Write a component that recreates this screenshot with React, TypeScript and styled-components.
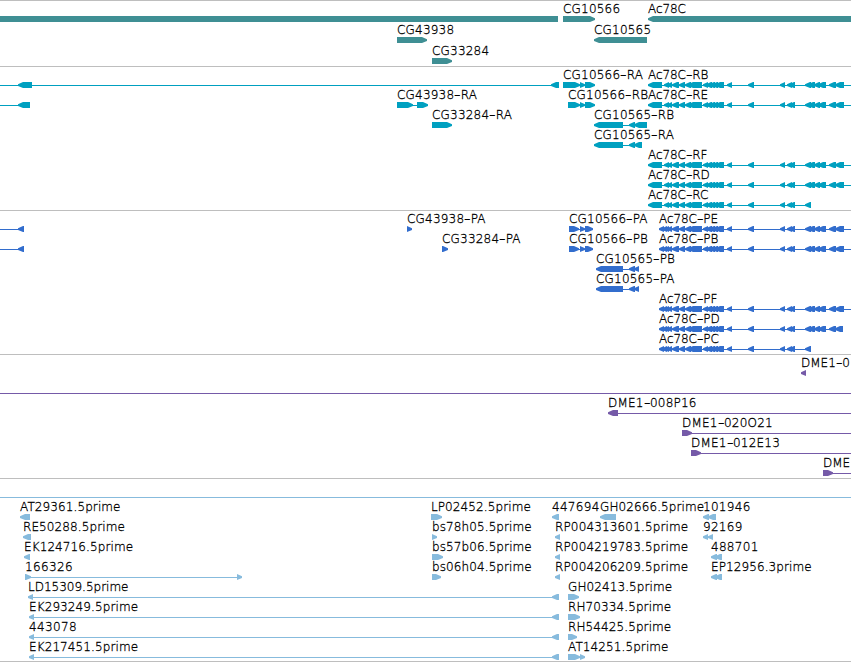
import { Fragment } from "react";
import styled, { createGlobalStyle } from "styled-components";

type Span = [number, number];
type Direction = "left" | "right";

interface Feature {
  label?: string;
  at?: number;
  spacing?: number;
  spans: Span[];
  dir?: Direction;
  line?: Span;
}

interface TrackData {
  name: string;
  color: string;
  rowHeight: number;
  gap: number;
  spacing: number;
  rows: Feature[][];
}

const WIDTH = 851;

// exons shared by every Ac78C transcript
const core: Span[] = [
  [664, 669], [667, 672], [672, 679], [679, 685], [685, 691], [688, 702],
  [703, 708], [706, 712], [709, 715], [712, 718], [715, 724],
  [727, 732], [748, 754], [780, 785], [787, 792], [789, 795],
];
const tail: Span[] = [
  [805, 811], [808, 815], [814, 820], [818, 826], [829, 836], [835, 844],
];
const rna: Span[] = [[648, 662], ...core];
const cds: Span[] = [[659, 664], [662, 667], ...core];

const ac78c = (label: string, spans: Span[], end = WIDTH): Feature => ({
  label,
  at: spans[0][0],
  spacing: -0.08,
  spans,
  line: [spans[0][0] + 3, end],
});

const tracks: TrackData[] = [
  {
    name: "genes",
    color: "#3f8f94",
    rowHeight: 21,
    gap: 2,
    spacing: 0.2,
    rows: [
      [
        { spans: [[-10, 558]] },
        { label: "CG10566", at: 563, dir: "right", spans: [[563, 595]] },
        { label: "Ac78C", at: 648, spacing: -0.08, spans: [[648, 860]] },
      ],
      [
        { label: "CG43938", at: 397, dir: "right", spans: [[397, 427]] },
        { label: "CG10565", at: 594, spans: [[594, 647]] },
      ],
      [{ label: "CG33284", at: 432, dir: "right", spans: [[432, 452]] }],
    ],
  },
  {
    name: "transcripts",
    color: "#00a0c0",
    rowHeight: 20,
    gap: 3,
    spacing: 0.2,
    rows: [
      [
        { spans: [[18, 32], [551, 559]], line: [0, 552] },
        {
          label: "CG10566-RA",
          at: 563,
          dir: "right",
          spans: [[563, 580], [580, 585], [585, 595]],
          line: [563, 594],
        },
        ac78c("Ac78C-RB", [...rna, ...tail]),
      ],
      [
        { spans: [[18, 30]], line: [0, 22] },
        {
          label: "CG43938-RA",
          at: 397,
          dir: "right",
          spans: [[397, 413], [417, 428]],
          line: [397, 420],
        },
        {
          label: "CG10566-RB",
          at: 568,
          dir: "right",
          spans: [[568, 580], [580, 585], [585, 595]],
          line: [568, 594],
        },
        ac78c("Ac78C-RE", [...rna, ...tail]),
      ],
      [
        { label: "CG33284-RA", at: 432, dir: "right", spans: [[432, 452]] },
        {
          label: "CG10565-RB",
          at: 594,
          spans: [[594, 623], [629, 635], [634, 647]],
          line: [600, 647],
        },
      ],
      [
        {
          label: "CG10565-RA",
          at: 594,
          spans: [[594, 623], [629, 635], [634, 642]],
          line: [600, 642],
        },
      ],
      [ac78c("Ac78C-RF", [...rna, ...tail])],
      [ac78c("Ac78C-RD", [...rna, ...tail])],
      [ac78c("Ac78C-RC", [...rna, [805, 811]], 809)],
    ],
  },
  {
    name: "proteins",
    color: "#326dcd",
    rowHeight: 20,
    gap: 3,
    spacing: 0.2,
    rows: [
      [
        { spans: [[18, 24]], line: [0, 22] },
        { label: "CG43938-PA", at: 407, dir: "right", spans: [[407, 412]] },
        {
          label: "CG10566-PA",
          at: 569,
          dir: "right",
          spans: [[569, 579], [580, 585], [585, 593]],
          line: [569, 592],
        },
        ac78c("Ac78C-PE", [...cds, ...tail]),
      ],
      [
        { spans: [[18, 24]], line: [0, 22] },
        { label: "CG33284-PA", at: 442, dir: "right", spans: [[442, 448]] },
        {
          label: "CG10566-PB",
          at: 569,
          dir: "right",
          spans: [[569, 579], [580, 585], [585, 593]],
          line: [569, 592],
        },
        ac78c("Ac78C-PB", [...cds, ...tail]),
      ],
      [
        {
          label: "CG10565-PB",
          at: 596,
          spans: [[596, 623], [629, 635], [634, 639]],
          line: [600, 638],
        },
      ],
      [
        {
          label: "CG10565-PA",
          at: 596,
          spans: [[596, 623], [629, 635], [634, 639]],
          line: [600, 638],
        },
      ],
      [ac78c("Ac78C-PF", [...cds, ...tail])],
      [ac78c("Ac78C-PD", [...cds, ...tail.slice(0, 5), [835, 843]], 842)],
      [ac78c("Ac78C-PC", [...cds, [805, 811]], 809)],
    ],
  },
  {
    name: "bacs",
    color: "#755aa8",
    rowHeight: 20,
    gap: 3,
    spacing: 0.2,
    rows: [
      [{ label: "DME1-0", at: 801, spacing: 0, spans: [[801, 806]] }],
      [{ spans: [], line: [0, WIDTH] }],
      [
        {
          label: "DME1-008P16",
          at: 608,
          spans: [[608, 618]],
          line: [612, WIDTH],
        },
      ],
      [
        {
          label: "DME1-020O21",
          at: 682,
          dir: "right",
          spans: [[682, 692]],
          line: [684, WIDTH],
        },
      ],
      [
        {
          label: "DME1-012E13",
          at: 691,
          dir: "right",
          spans: [[691, 701]],
          line: [693, WIDTH],
        },
      ],
      [
        {
          label: "DME",
          at: 823,
          spacing: 0,
          dir: "right",
          spans: [[823, 833]],
          line: [825, WIDTH],
        },
      ],
    ],
  },
  {
    name: "ests",
    color: "#87bbdd",
    rowHeight: 20,
    gap: 2,
    spacing: 0.1,
    rows: [
      [{ spans: [], line: [0, WIDTH] }],
      [
        { label: "AT29361.5prime", at: 20, spans: [[20, 30]] },
        { label: "LP02452.5prime", at: 431, dir: "right", spans: [[431, 442]] },
        { label: "447694", at: 552, spacing: 0.3, spans: [[552, 559]] },
        { label: "GH02666.5prime", at: 600, spans: [[600, 616]] },
        { label: "101946", at: 703, spacing: 0.3, spans: [[703, 709], [708, 716]] },
      ],
      [
        { label: "RE50288.5prime", at: 23, spans: [[23, 31]] },
        { label: "bs78h05.5prime", at: 432, dir: "right", spans: [[432, 437]] },
        { label: "RP004313601.5prime", at: 555, spacing: 0.15, spans: [[555, 560]] },
        { label: "92169", at: 703, spacing: 0.3, spans: [[703, 708], [708, 713]] },
      ],
      [
        { label: "EK124716.5prime", at: 24, spans: [[24, 30]] },
        { label: "bs57b06.5prime", at: 432, dir: "right", spans: [[432, 443]] },
        { label: "RP004219783.5prime", at: 555, spacing: 0.15, spans: [[555, 560]] },
        { label: "488701", at: 711, spacing: 0.3, spans: [[711, 717], [715, 722]] },
      ],
      [
        {
          label: "166326",
          at: 25,
          spacing: 0.35,
          dir: "right",
          spans: [[25, 31], [237, 242]],
          line: [25, 240],
        },
        { label: "bs06h04.5prime", at: 432, dir: "right", spans: [[432, 441]] },
        { label: "RP004206209.5prime", at: 555, spacing: 0.15, spans: [[555, 560]] },
        { label: "EP12956.3prime", at: 711, spans: [[711, 717], [715, 722]] },
      ],
      [
        {
          label: "LD15309.5prime",
          at: 28,
          spacing: 0,
          spans: [[28, 33], [552, 559]],
          line: [30, 555],
        },
        { label: "GH02413.5prime", at: 568, dir: "right", spans: [[568, 579]] },
      ],
      [
        {
          label: "EK293249.5prime",
          at: 29,
          spans: [[29, 34], [552, 559]],
          line: [30, 555],
        },
        { label: "RH70334.5prime", at: 568, dir: "right", spans: [[568, 580]] },
      ],
      [
        {
          label: "443078",
          at: 29,
          spacing: 0.35,
          spans: [[29, 34], [552, 559]],
          line: [30, 555],
        },
        { label: "RH54425.5prime", at: 568, dir: "right", spans: [[568, 577]] },
      ],
      [
        {
          label: "EK217451.5prime",
          at: 29,
          spans: [[29, 34], [552, 559]],
          line: [30, 555],
        },
        {
          label: "AT14251.5prime",
          at: 568,
          dir: "right",
          spans: [[568, 580], [580, 585]],
          line: [568, 584],
        },
      ],
    ],
  },
];

function arrowPath([start, end]: Span, dir: Direction) {
  const [tip, base] = dir === "left" ? [start, end] : [end, start];
  const head = Math.min(5, end - start) * (dir === "left" ? 1 : -1);
  return `M${tip} 2.3L${tip + head} 0H${base}V6H${tip + head}L${tip} 3.9Z`;
}

function FeatureGlyph({ spans, dir = "left", line }: Feature) {
  return (
    <g>
      {line && <rect x={line[0]} y={3} width={line[1] - line[0]} height={1} />}
      {spans.map((span, i) => (
        <path key={i} d={arrowPath(span, dir)} />
      ))}
    </g>
  );
}

function LabelText({ text }: { text: string }) {
  return text.split("-").map((part, i) => (
    <Fragment key={i}>
      {i > 0 && <Dash>-</Dash>}
      {part}
    </Fragment>
  ));
}

function Track({ track }: { track: TrackData }) {
  return (
    <TrackContainer $gap={track.gap}>
      {track.rows.map((features, i) => (
        <Row key={i} $height={track.rowHeight}>
          <Labels>
            {features.map(
              (f) =>
                f.label && (
                  <Label
                    key={f.label}
                    $left={f.at ?? 0}
                    $spacing={f.spacing ?? track.spacing}
                  >
                    <LabelText text={f.label} />
                  </Label>
                )
            )}
          </Labels>
          <Glyphs $color={track.color} width={WIDTH} height={6}>
            {features.map((f, n) => (
              <FeatureGlyph key={n} {...f} />
            ))}
          </Glyphs>
        </Row>
      ))}
    </TrackContainer>
  );
}

export default function App() {
  return (
    <>
      <GlobalStyle />
      <Browser>
        {tracks.map((track) => (
          <Track key={track.name} track={track} />
        ))}
      </Browser>
    </>
  );
}

const GlobalStyle = createGlobalStyle`
  body {
    margin: 0;
    background: #fff;
  }
`;

const Browser = styled.main`
  display: flex;
  flex-direction: column;
  width: ${WIDTH}px;
  height: 662px;
  box-sizing: border-box;
  overflow: hidden;
  border-bottom: 1px solid #bebebe;
  font-family: "DejaVu Sans", sans-serif;
  font-size: 12px;
  color: #000;
`;

const TrackContainer = styled.section<{ $gap: number }>`
  flex: none;
  border-top: 1px solid #bebebe;
  padding-bottom: ${(props) => props.$gap}px;
`;

const Row = styled.div<{ $height: number }>`
  display: flex;
  flex-direction: column;
  height: ${(props) => props.$height}px;
`;

const Labels = styled.div`
  position: relative;
  flex: none;
  height: 15px;
`;

/* sits at the start coordinate of its feature */
const Label = styled.span<{ $left: number; $spacing: number }>`
  position: absolute;
  left: ${(props) => props.$left}px;
  top: 1px;
  font-weight: 200;
  line-height: 14px;
  letter-spacing: ${(props) => props.$spacing}px;
  white-space: nowrap;
  -webkit-text-stroke: 0.3px #000;
`;

const Dash = styled.span`
  display: inline-block;
  width: 6.4px;
  letter-spacing: 0;
  transform: scaleX(1.5);
  transform-origin: left;
`;

const Glyphs = styled.svg<{ $color: string }>`
  display: block;
  flex: none;
  overflow: visible;
  fill: ${(props) => props.$color};
`;
